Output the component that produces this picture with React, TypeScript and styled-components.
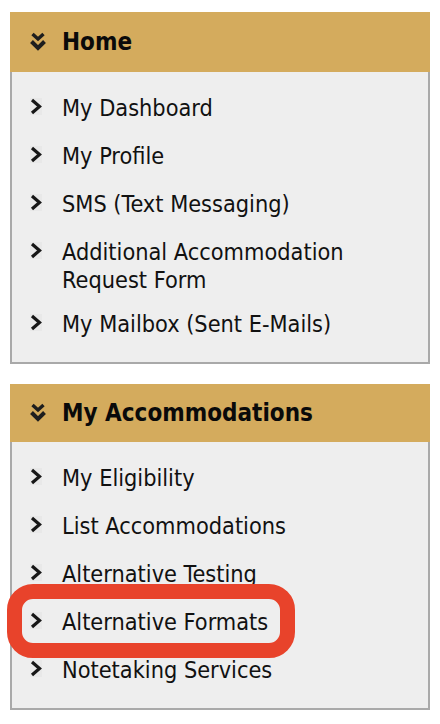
import React from "react";
import styled, { createGlobalStyle } from "styled-components";

const GlobalStyle = createGlobalStyle`
  body {
    margin: 0;
    background: #ffffff;
    font-family: "DejaVu Sans Condensed", "DejaVu Sans", Verdana, sans-serif;
    color: #111111;
  }
`;

// Styled components
const Page = styled.div`
  width: 420px;
  padding: 12px 10px;
  display: flex;
  flex-direction: column;
  gap: 20px;
`;

const Panel = styled.section`
  display: flex;
  flex-direction: column;
`;

const Header = styled.div<{ $height: number }>`
  height: ${(p) => p.$height}px;
  background-color: #d4ab5d;
  display: flex;
  align-items: center;
  gap: 16px;
  padding-left: 20px;
  font-size: 24px;
  font-weight: bold;
  color: #0a0a0a;
`;

const Body = styled.div`
  border: 2px solid #a9a9a9;
  border-top: none;
  background-color: #eeeeee;
  padding: 22px 0 20px 18px;
`;

const LinkList = styled.ul`
  list-style: none;
  margin: 0;
  padding: 0;
  display: flex;
  flex-direction: column;
  gap: 16px;
`;

const LinkItem = styled.li`
  position: relative;
  display: flex;
  align-items: flex-start;
  min-height: 32px;
  font-size: 23.3px;
  line-height: 28px;
  padding-right: 10px;
`;

const Bullet = styled.span`
  flex: 0 0 12px;
  height: 17px;
  margin-top: 4px;
  margin-right: 20px;
  background-color: #e8e8e8;
  display: flex;
`;

const Highlight = styled.span`
  position: absolute;
  left: -23px;
  top: -24px;
  width: 288px;
  height: 74px;
  box-sizing: border-box;
  border: 15px solid #e8432b;
  border-radius: 26px;
  pointer-events: none;
`;

const Chevron = () => (
  <svg width="12" height="17" viewBox="0 0 12 17">
    <path d="M2 2 L9.5 8.5 L2 15" fill="none" stroke="#161616" strokeWidth="3.2" />
  </svg>
);

const DoubleChevron = () => (
  <svg width="16" height="20" viewBox="0 0 16 20" style={{ filter: "blur(0.5px)" }}>
    <path d="M2.5 2 L8 7 L13.5 2" fill="none" stroke="#1e1e1e" strokeWidth="3.4" />
    <path d="M1.5 9.5 L8 16 L14.5 9.5" fill="none" stroke="#1e1e1e" strokeWidth="4" />
  </svg>
);

type MenuLink = { label: string; highlighted?: boolean };
type MenuSection = { title: string; headerHeight: number; links: MenuLink[] };

const sections: MenuSection[] = [
  {
    title: "Home",
    headerHeight: 60,
    links: [
      { label: "My Dashboard" },
      { label: "My Profile" },
      { label: "SMS (Text Messaging)" },
      { label: "Additional Accommodation Request Form" },
      { label: "My Mailbox (Sent E-Mails)" },
    ],
  },
  {
    title: "My Accommodations",
    headerHeight: 58,
    links: [
      { label: "My Eligibility" },
      { label: "List Accommodations" },
      { label: "Alternative Testing" },
      { label: "Alternative Formats", highlighted: true },
      { label: "Notetaking Services" },
    ],
  },
];

const App: React.FC = () => {
  return (
    <>
      <GlobalStyle />
      <Page>
        {sections.map((section) => (
          <Panel key={section.title}>
            <Header $height={section.headerHeight}>
              <DoubleChevron />
              <span>{section.title}</span>
            </Header>
            <Body>
              <LinkList>
                {section.links.map((link) => (
                  <LinkItem key={link.label}>
                    <Bullet>
                      <Chevron />
                    </Bullet>
                    <span>{link.label}</span>
                    {link.highlighted && <Highlight />}
                  </LinkItem>
                ))}
              </LinkList>
            </Body>
          </Panel>
        ))}
      </Page>
    </>
  );
};

export default App;
